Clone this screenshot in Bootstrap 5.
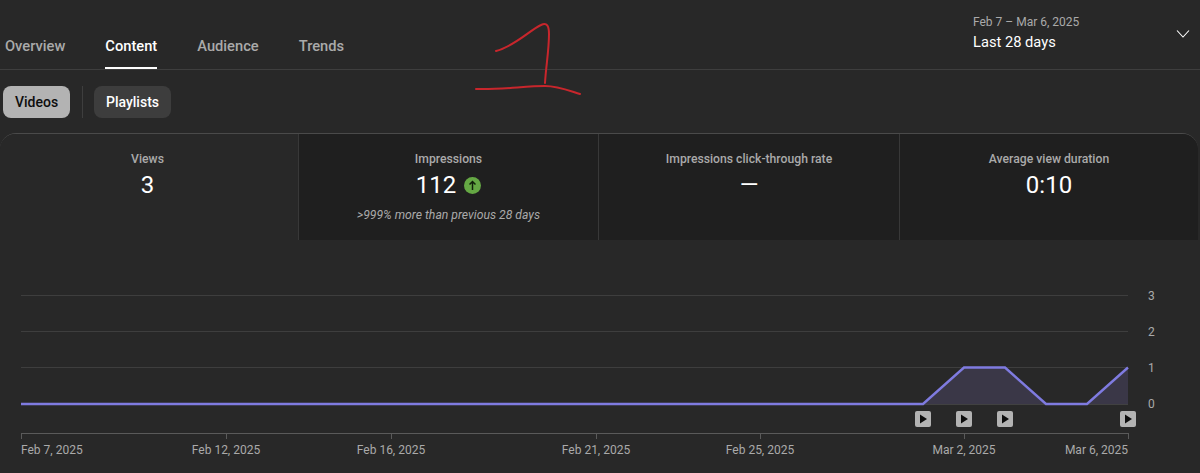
<!DOCTYPE html>
<html lang="en">
<head>
    <meta charset="UTF-8">
    <title>Channel analytics</title>
    <link href="https://cdn.jsdelivr.net/npm/bootstrap@5.3.0/dist/css/bootstrap.min.css" rel="stylesheet">
    <style>
        html, body { height: 100%; }
        body {
            background: #282828;
            color: #fff;
            font-family: Roboto, "Liberation Sans", sans-serif;
            overflow: hidden;
            position: relative;
        }
        .top-bar { height: 70px; border-bottom: 1px solid #3e3e3e; padding-left: 5px; }
        .tabs { gap: 40px; height: 69px; }
        .tab-link {
            color: #aaa;
            font-size: 14.7px;
            font-weight: 500;
            line-height: 20px;
            padding: 0 0 12px;
            text-decoration: none;
            border-bottom: 2px solid transparent;
            margin-top: 36px;
            height: 33px;
        }
        .tab-link.active { color: #fff; border-bottom-color: #fff; }
        .date-picker { width: 203px; padding-top: 14px; }
        .date-range { color: #aaa; font-size: 12px; line-height: 16px; }
        .date-name { font-size: 14.7px; line-height: 22px; margin-top: 1px; }
        .chevron { margin: 29px 10px 0 0; }
        .chips { padding: 16px 0 0 3px; height: 63px; }
        .chip {
            font-size: 14px;
            font-weight: 500;
            line-height: 20px;
            height: 32px;
            padding: 6px 12px;
            border: 0;
            border-radius: 8px;
            color: #fff;
            background: #3d3d3d;
        }
        .chip.selected { background: #b3b3b3; color: #0d0d0d; width: 67px; }
        .chip-sep { width: 1px; height: 32px; background: #3e3e3e; margin: 0 11px 0 12px; }
        .metrics {
            display: grid;
            grid-template-columns: 298px 300px 301px 299px;
            width: 1198px;
            height: 107px;
            border-top: 1px solid #4a4a4a;
            border-radius: 16px 16px 0 0;
            overflow: hidden;
        }
        .metric {
            background: #1f1f1f;
            border-left: 1px solid #383838;
            text-align: center;
            padding-top: 16px;
        }
        .metric.active { background: #282828; border-left: 0; padding-right: 3px; }
        .metric-name { color: #aaa; font-size: 12.2px; font-weight: 500; line-height: 18px; }
        .metric-value { font-size: 24px; line-height: 32px; margin-top: 1px; }
        .metric-note { color: #aaa; font-size: 12.2px; font-style: italic; line-height: 16px; margin-top: 6px; }
        .up-badge { width: 17px; height: 17px; vertical-align: -1px; margin-left: 8px; }
        .chart { display: block; }
        .chart text { font-family: Roboto, "Liberation Sans", sans-serif; font-size: 12px; fill: #aaa; }
        .scribble { position: absolute; left: 470px; top: 18px; }
    </style>
</head>
<body>
    <div class="top-bar d-flex justify-content-between">
        <nav class="nav tabs">
            <a class="tab-link" href="#">Overview</a>
            <a class="tab-link active" href="#">Content</a>
            <a class="tab-link" href="#">Audience</a>
            <a class="tab-link" href="#">Trends</a>
        </nav>
        <div class="d-flex">
            <div class="date-picker">
                <div class="date-range">Feb 7 – Mar 6, 2025</div>
                <div class="date-name">Last 28 days</div>
            </div>
            <svg class="chevron" width="14" height="10" viewBox="0 0 14 10">
                <path d="M1 1.5 7 8l6-6.5" fill="none" stroke="#fff" stroke-width="1.1"/>
            </svg>
        </div>
    </div>

    <div class="chips d-flex align-items-start">
        <button class="chip selected">Videos</button>
        <span class="chip-sep"></span>
        <button class="chip">Playlists</button>
    </div>

    <div class="metrics">
        <div class="metric active">
            <div class="metric-name">Views</div>
            <div class="metric-value">3</div>
        </div>
        <div class="metric">
            <div class="metric-name">Impressions</div>
            <div class="metric-value">112<svg class="up-badge" viewBox="0 0 16 16">
                <circle cx="8" cy="8" r="8" fill="#65a844"/>
                <path d="M8 12.2V4.4M5.2 7.1 8 4.2l2.8 2.9" fill="none" stroke="#10200a" stroke-width="1.4"/>
            </svg></div>
            <div class="metric-note">&gt;999% more than previous 28 days</div>
        </div>
        <div class="metric">
            <div class="metric-name">Impressions click-through rate</div>
            <div class="metric-value">—</div>
        </div>
        <div class="metric">
            <div class="metric-name">Average view duration</div>
            <div class="metric-value">0:10</div>
        </div>
    </div>

    <svg class="chart" width="1200" height="233" viewBox="0 240 1200 233">
        <g stroke="#3e3e3e">
            <path d="M21 295.5H1128M21 331.5H1128M21 367.5H1128"/>
        </g>
        <path d="M21 404H1128" stroke="#5a5a5a"/>
        <path d="M923 404 964 367.5H1005L1046 404H1087L1128 367.5V404Z" fill="#3a3747"/>
        <path d="M21 404H923L964 367.5H1005L1046 404H1087L1128 367.5" fill="none" stroke="#7f7be0" stroke-width="2.4"/>
        <text x="1148" y="300">3</text>
        <text x="1148" y="336">2</text>
        <text x="1148" y="372">1</text>
        <text x="1148" y="408">0</text>
        <g id="markers">
            <rect x="915" y="411" width="16" height="16" rx="2" fill="#b3b3b3"/><path d="M920 414.5v9l7-4.5z" fill="#0d0d0d"/>
            <rect x="956" y="411" width="16" height="16" rx="2" fill="#b3b3b3"/><path d="M961 414.5v9l7-4.5z" fill="#0d0d0d"/>
            <rect x="997" y="411" width="16" height="16" rx="2" fill="#b3b3b3"/><path d="M1002 414.5v9l7-4.5z" fill="#0d0d0d"/>
            <rect x="1120" y="411" width="16" height="16" rx="2" fill="#b3b3b3"/><path d="M1125 414.5v9l7-4.5z" fill="#0d0d0d"/>
        </g>
        <path d="M21 433.5H1128M21.5 433V439M226.5 433V439M391.5 433V439M596.5 433V439M760.5 433V439M964.5 433V439M1128.5 433V439" stroke="#5a5a5a" fill="none"/>
        <text x="21" y="454">Feb 7, 2025</text>
        <text x="226" y="454" text-anchor="middle">Feb 12, 2025</text>
        <text x="391" y="454" text-anchor="middle">Feb 16, 2025</text>
        <text x="596" y="454" text-anchor="middle">Feb 21, 2025</text>
        <text x="760" y="454" text-anchor="middle">Feb 25, 2025</text>
        <text x="964" y="454" text-anchor="middle">Mar 2, 2025</text>
        <text x="1128" y="454" text-anchor="end">Mar 6, 2025</text>
    </svg>

    <svg class="scribble" width="120" height="84" viewBox="470 18 120 84">
        <path d="M496 51C515 46 530 30 541 25C547 22 549 26 549 34C549 50 546 66 545 83" fill="none" stroke="#c8262c" stroke-width="2" stroke-linecap="round"/>
        <path d="M476 89C500 90 525 86 545 86C558 86 570 91 580 94" fill="none" stroke="#c8262c" stroke-width="2" stroke-linecap="round"/>
    </svg>

    <script src="https://cdn.jsdelivr.net/npm/bootstrap@5.3.0/dist/js/bootstrap.bundle.min.js"></script>
</body>
</html>
